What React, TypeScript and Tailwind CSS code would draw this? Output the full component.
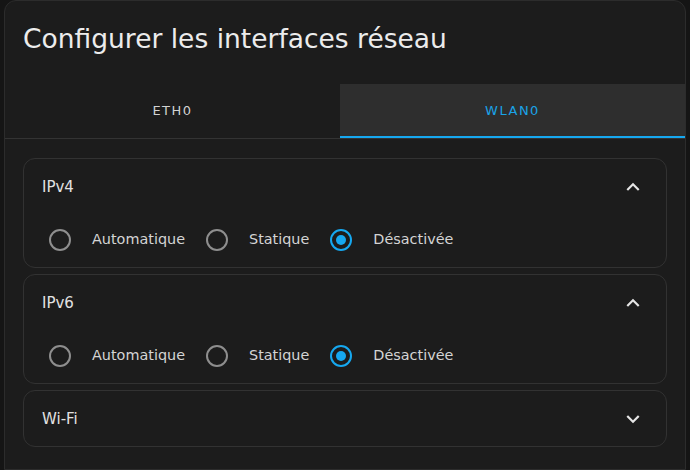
import React from "react";

const font = { fontFamily: '"DejaVu Sans", "Noto Sans", sans-serif' };

function Chevron({ up }: { up: boolean }) {
  return (
    <svg width="26" height="26" viewBox="0 0 24 24" className="text-[#e6e6e6]">
      {up ? (
        <path fill="currentColor" d="M12 8l-6 6 1.41 1.41L12 10.83l4.59 4.58L18 14z" />
      ) : (
        <path fill="currentColor" d="M16.59 8.59 12 13.17 7.41 8.59 6 10l6 6 6-6z" />
      )}
    </svg>
  );
}

function Radio({ checked }: { checked: boolean }) {
  return checked ? (
    <span className="flex h-[22px] w-[22px] items-center justify-center rounded-full border-2 border-[#16a8f0]">
      <span className="h-[10px] w-[10px] rounded-full bg-[#16a8f0]" />
    </span>
  ) : (
    <span className="h-[22px] w-[22px] rounded-full border-2 border-[#8e8e8e]" />
  );
}

function Section({ title, open }: { title: string; open: boolean }) {
  const opts = ["Automatique", "Statique", "Désactivée"];
  return (
    <div className="rounded-[12px] border border-[#323232] bg-[#1c1c1c]">
      <div className="flex h-[55px] items-center justify-between pl-[18px] pr-[20px]">
        <span className="pt-[1px] text-[15px] text-[#e2e2e2]">{title}</span>
        <Chevron up={open} />
      </div>
      {open && (
        <div className="flex items-center gap-[21px] pl-[25px] pt-[15px] pb-[16px]">
          {opts.map((o, i) => (
            <React.Fragment key={o}>
              <Radio checked={i === 2} />
              <span className="text-[14.4px] text-[#d4d4d4]">{o}</span>
            </React.Fragment>
          ))}
        </div>
      )}
    </div>
  );
}

export default function App() {
  return (
    <div className="h-[470px] w-[690px] overflow-hidden bg-[#151515]" style={font}>
      <div className="ml-[4px] flex h-[470px] w-[682px] flex-col rounded-t-[12px] border border-[#2c2c2c] bg-[#1c1c1c]">
        <div className="flex h-[83px] items-start pl-[18px] pt-[21px]">
          <h1 className="text-[26.5px] leading-[34px] text-[#ececec]">Configurer les interfaces réseau</h1>
        </div>
        <div className="flex border-b border-[#333333]">
          <div className="flex h-[54px] w-[335px] items-center justify-center text-[13px] tracking-[1.5px] text-[#d2d2d2]">
            ETH0
          </div>
          <div className="flex h-[54px] flex-1 items-center justify-center border-b-2 border-[#16a8f0] bg-[#2e2e2e] pt-[2px] text-[13px] tracking-[1.5px] text-[#1aa3e8]">
            WLAN0
          </div>
        </div>
        <div className="flex flex-col gap-[6px] px-[18px] pt-[19px]">
          <Section title="IPv4" open />
          <Section title="IPv6" open />
          <Section title="Wi-Fi" open={false} />
        </div>
      </div>
    </div>
  );
}
